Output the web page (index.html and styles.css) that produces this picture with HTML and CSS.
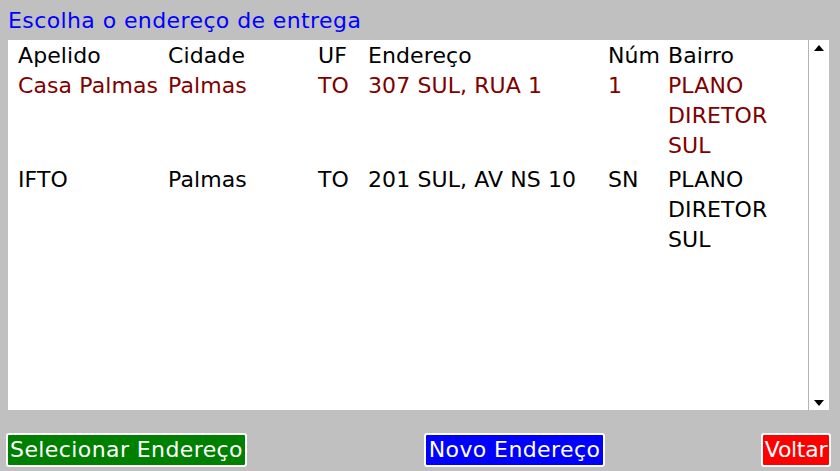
FILE: index.html
```html
<!DOCTYPE html>
<html lang="pt-BR">
<head>
<meta charset="utf-8">
<title>Escolha o endereço de entrega</title>
<link rel="stylesheet" href="styles.css">
</head>
<body>
<div class="screen">
  <h1 class="title">Escolha o endereço de entrega</h1>
  <div class="listbox">
    <div class="list">
      <div class="row head">
        <div>Apelido</div><div>Cidade</div><div>UF</div><div>Endereço</div><div>Núm</div><div>Bairro</div>
      </div>
      <div class="row selected">
        <div>Casa Palmas</div><div>Palmas</div><div>TO</div><div>307 SUL, RUA 1</div><div>1</div><div>PLANO DIRETOR SUL</div>
      </div>
      <div class="row">
        <div>IFTO</div><div>Palmas</div><div>TO</div><div>201 SUL, AV NS 10</div><div>SN</div><div>PLANO DIRETOR SUL</div>
      </div>
    </div>
    <div class="scrollbar">
      <span class="arrow up"></span>
      <span class="arrow down"></span>
    </div>
  </div>
  <div class="actions">
    <button class="btn green">Selecionar Endereço</button>
    <button class="btn blue">Novo Endereço</button>
    <button class="btn red">Voltar</button>
  </div>
</div>
</body>
</html>
```
FILE: styles.css
```css
html, body {
  margin: 0;
  padding: 0;
  background: #c0c0c0;
}
.screen {
  width: 840px;
  height: 471px;
  font-family: "DejaVu Sans", sans-serif;
  font-size: 22px;
  line-height: 30px;
  display: flex;
  flex-direction: column;
}
.title {
  margin: 0;
  padding: 6px 8px 4px;
  font-size: 22px;
  font-weight: normal;
  line-height: 30px;
  letter-spacing: 0.4px;
  color: #0000ff;
}
.listbox {
  margin-left: 8px;
  width: 821px;
  height: 370px;
  background: #fff;
  display: flex;
}
.list {
  flex: 1;
  padding: 1px 0 0 10px;
  border-right: 1px solid #b4b4b4;
  letter-spacing: 0.1px;
}
.row {
  display: grid;
  grid-template-columns: 150px 150px 50px 240px 60px 130px;
  color: #000;
  padding-bottom: 4px;
}
.row.head {
  padding-bottom: 0;
}
.row.selected {
  color: #800000;
}
.scrollbar {
  width: 20px;
  display: flex;
  flex-direction: column;
  justify-content: space-between;
  align-items: center;
  padding: 5px 0 4px;
}
.arrow {
  width: 0;
  height: 0;
  border-left: 5px solid transparent;
  border-right: 5px solid transparent;
}
.arrow.up {
  border-bottom: 6px solid #000;
}
.arrow.down {
  border-top: 6px solid #000;
}
.actions {
  display: flex;
  padding: 23px 9px 0 6px;
}
.btn {
  font: inherit;
  font-size: 22px;
  line-height: 30px;
  letter-spacing: 0.4px;
  height: 34px;
  color: #fff;
  border: 2px solid #fff;
  border-radius: 3px;
  padding: 0 1px;
  white-space: nowrap;
  text-align: center;
  cursor: pointer;
}
.green { background: #008000; width: 241px; }
.blue { background: #0000ff; width: 181px; margin-left: 177px; }
.red { background: #ff0000; width: 70px; margin-left: auto; padding: 0; letter-spacing: -0.3px; }
```
